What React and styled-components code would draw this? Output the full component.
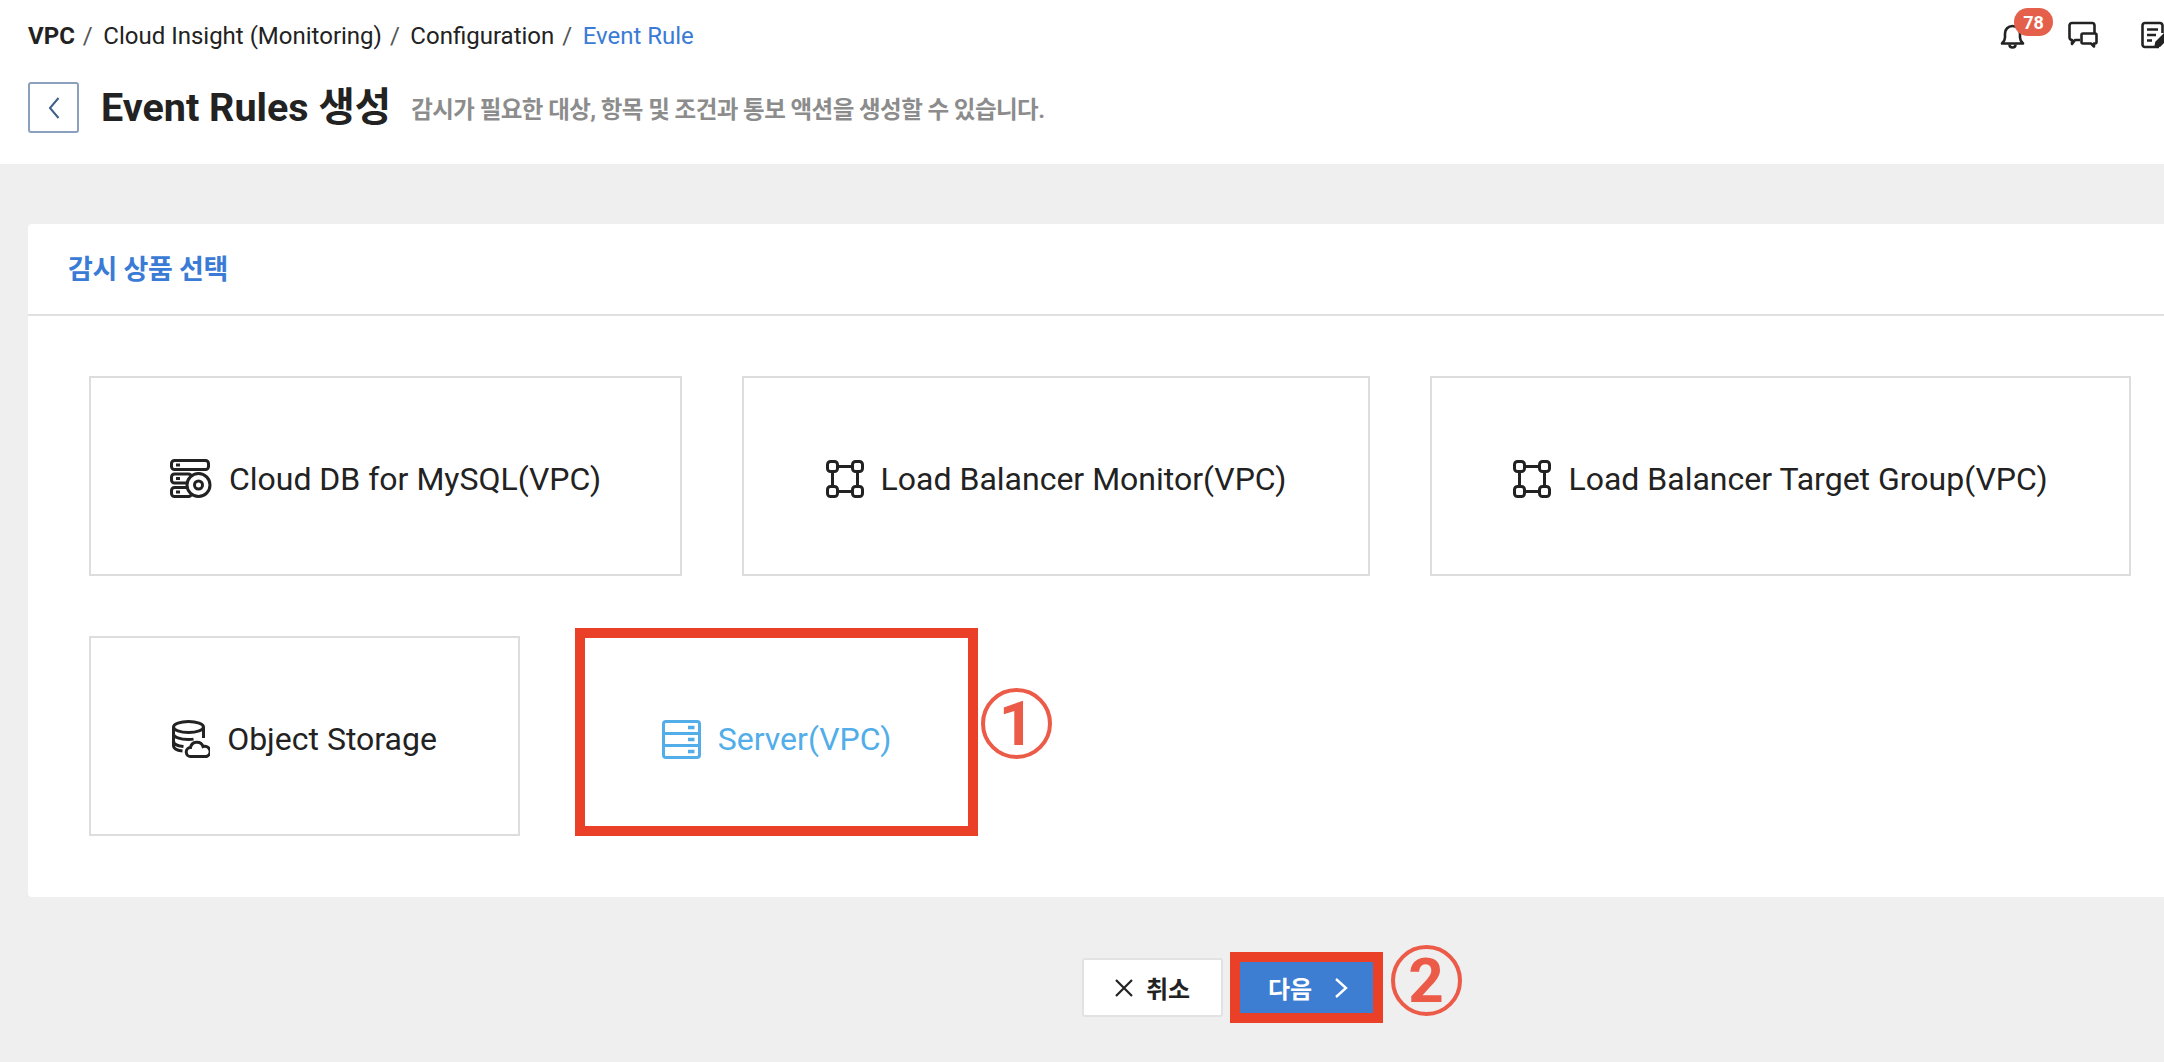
import React from "react";
import styled, { createGlobalStyle } from "styled-components";

const Global = createGlobalStyle`
  html, body { margin: 0; padding: 0; background: #efefef; }
  #root { width: 2164px; height: 1062px; overflow: hidden; }
  * { box-sizing: border-box; }
`;
const FONT = `Roboto, "Noto Sans CJK KR", sans-serif`;
const RED = "#ea4027";
const Page = styled.div`
  width: 2164px; height: 1062px; overflow: hidden; font-family: ${FONT}; color: #222;
`;
const Header = styled.header`
  height: 164px; background: #fff; padding: 0 0 0 28px; position: relative;
`;
const TopRow = styled.div`
  display: flex; justify-content: space-between; height: 82px; padding-top: 21px;
`;
const Crumbs = styled.nav`
  display: flex; align-items: center; height: 30px; font-size: 24px; line-height: 30px;
`;
const Crumb = styled.span`
  font-weight: ${p => (p.$bold ? 700 : 400)};
  color: ${p => (p.$active ? "#3a7bd5" : "#222")};
`;
const Sep = styled.span`
  color: #555; margin: 0 10.5px 0 8px;
`;
const Tools = styled.div`
  display: flex; align-items: flex-start; width: 170px; margin-right: -6px; gap: 43px; position: relative;
`;
const ToolIcon = styled.svg`
  display: block; flex: none; fill: none; stroke: #222; stroke-width: 2.6;
`;
const Badge = styled.span`
  position: absolute; left: 14px; top: -13px; width: 39px; height: 28px; border-radius: 14px;
  background: #e5604a; color: #fff; font-size: 18px; font-weight: 700; display: flex; align-items: center; justify-content: center;
`;
const TitleRow = styled.div`
  display: flex; align-items: center; height: 51px;
`;
const BackButton = styled.button`
  width: 51px; height: 51px; padding: 0; background: #fff; border: 2px solid #8aa0bd; border-radius: 3px;
  display: flex; align-items: center; justify-content: center;
`;
const Title = styled.h1`
  margin: 0 0 0 22px; font-size: 39.5px; font-weight: 700; line-height: 51px; color: #222;
`;
const Sub = styled.span`
  margin: 1px 0 0 20px; font-size: 23.5px; font-weight: 700; color: #8c8c8c; letter-spacing: -0.55px;
`;
const Main = styled.main`
  width: 2464px; padding: 60px 28px 0;
`;
const Panel = styled.section`
  background: #fff; border-radius: 4px;
`;
const PanelHead = styled.div`
  height: 92px; border-bottom: 2px solid #e0e0e0; padding: 0 0 0 40px; display: flex; align-items: center;
`;
const PanelTitle = styled.h2`
  margin: 0; font-size: 27px; font-weight: 700; color: #3a7bd5; letter-spacing: -0.3px; position: relative; top: -2px;
`;
const PanelBody = styled.div`
  padding: 60px 61px 61px; display: flex; flex-direction: column; gap: 60px;
`;
const CardRow = styled.div`
  display: flex; gap: ${p => p.$gap || 60}px;
`;
const Card = styled.div`
  position: relative; height: 200px; width: ${p => p.$w}px; background: #fff; border: 2px solid #ddd;
  display: flex; align-items: center; justify-content: center; gap: 17px; padding-top: 5px;
  font-size: 32px; color: #222;
`;
const SelectedCard = styled(Card)`
  height: 208px; margin-top: -8px; border: 10px solid ${RED}; color: #52ade9; padding-top: 14px;
`;
const Circled = styled.span`
  position: absolute; width: 71px; height: 71px; border-radius: 50%; border: 4px solid #ec5a48; color: #ec5a48;
  display: flex; align-items: center; justify-content: center; font-size: 62px; line-height: 1; font-weight: 700; font-family: Roboto, sans-serif;
  left: ${p => p.$left}px; top: ${p => p.$top}px;
`;
const Icon = styled.svg`
  display: block; flex: none; fill: none; stroke: currentColor; stroke-width: 3;
`;
const Footer = styled.div`
  display: flex; justify-content: center; align-items: center; gap: 7px; margin-top: 55px; height: 71px;
`;
const CancelButton = styled.button`
  width: 141px; height: 59px; background: #fff; border: 2px solid #e2e2e2; border-radius: 3px; padding: 0;
  display: flex; align-items: center; justify-content: center; gap: 12px;
  font: 700 24px ${FONT}; color: #222;
`;
const NextButton = styled.button`
  position: relative; width: 153px; height: 71px; background: #3d7dd2; border: 10px solid ${RED}; padding: 0 0 0 4px;
  display: flex; align-items: center; justify-content: center; gap: 22px;
  font: 700 24px ${FONT}; color: #fff;
`;

const DbIcon = () => (
  <Icon width="42" height="40" viewBox="0 0 42 40">
    <rect x="1.5" y="1.5" width="37" height="9" rx="3" />
    <rect x="1.5" y="15" width="20" height="9" rx="3" />
    <rect x="1.5" y="28.5" width="20" height="9" rx="3" />
    <path d="M6 6h4M6 19.5h4M6 33h4" />
    <circle cx="28.5" cy="26" r="11.5" fill="#fff" />
    <circle cx="28.5" cy="26" r="4" />
  </Icon>
);
const NodesIcon = () => (
  <Icon width="38" height="38" viewBox="0 0 38 38">
    <rect x="1.5" y="1.5" width="10" height="10" rx="3" />
    <rect x="26.5" y="1.5" width="10" height="10" rx="3" />
    <rect x="1.5" y="26.5" width="10" height="10" rx="3" />
    <rect x="26.5" y="26.5" width="10" height="10" rx="3" />
    <path d="M11.5 6.500h15M11.5 31.500h15M6.500 11.500v15M31.500 11.500v15" />
  </Icon>
);
const StorageIcon = () => (
  <Icon width="38" height="38" viewBox="0 0 38 38">
    <ellipse cx="16.500" cy="7" rx="15" ry="5.500" />
    <path d="M1.500 7v19c0 2.500 4 4.500 9 5M31.500 7v11M1.500 14c0 3 6.500 5.500 15 5.500 2 0 3.500-.1 5-.4M1.500 21c0 3 4.500 5 10 5.500" />
    <path d="M19 36.500a4.500 4.500 0 0 1-.5-9 6.500 6.500 0 0 1 12.500-1 5 5 0 0 1 3.500 10z" fill="#fff" />
  </Icon>
);
const ServerIcon = () => (
  <Icon width="39" height="39" viewBox="0 0 39 39">
    <rect x="1.500" y="1.500" width="36" height="36" rx="2.500" />
    <path d="M1.500 13.500h36M1.500 25.500h36" />
    <path d="M26 7.500h6.500M26 19.500h6.500M26 31.500h6.500" strokeWidth="3.500" />
  </Icon>
);

export default function App() {
  return (
    <Page>
      <Global />
      <Header>
        <TopRow>
          <Crumbs>
            <Crumb $bold>VPC</Crumb><Sep>/</Sep>
            <Crumb>Cloud Insight (Monitoring)</Crumb><Sep>/</Sep>
            <Crumb>Configuration</Crumb><Sep>/</Sep>
            <Crumb $active>Event Rule</Crumb>
          </Crumbs>
          <Tools>
            <ToolIcon width="25" height="28" viewBox="0 0 25 28">
              <path d="M2 22.500h21c-1.500-1.500-3-3-3-6v-4c0-4-3-7.500-7.500-7.500S5 8.500 5 12.500v4c0 3-1.500 4.500-3 6z" strokeLinejoin="round" />
              <path d="M9.500 23.500c0 2 1.300 3 3 3s3-1 3-3" />
            </ToolIcon>
            <Badge>78</Badge>
            <ToolIcon width="30" height="28" viewBox="0 0 30 28">
              <path d="M12 19H7l-3 4v-4H4a2.500 2.500 0 0 1-2.500-2.500v-12A2.500 2.500 0 0 1 4 2h20a2.500 2.500 0 0 1 2.500 2.500V12" strokeLinejoin="round" />
              <path d="M15 12.500h12a1.500 1.500 0 0 1 1.500 1.500v7a1.500 1.500 0 0 1-1.500 1.500h-1v3l-3-3h-8a1.500 1.500 0 0 1-1.500-1.500v-7a1.500 1.500 0 0 1 1.500-1.500z" strokeLinejoin="round" />
            </ToolIcon>
            <ToolIcon width="29" height="28" viewBox="0 0 29 28">
              <path d="M18 26H4a2.500 2.500 0 0 1-2.500-2.500v-19A2.500 2.500 0 0 1 4 2h15a2.500 2.500 0 0 1 2.500 2.500V12" />
              <path d="M6 8.500h11M6 14h9M6 19.500h5" />
              <path d="M14 26l1-5 9-9 4 4-9 9z" fill="#222" stroke="#222" strokeWidth="1.500" />
            </ToolIcon>
          </Tools>
        </TopRow>
        <TitleRow>
          <BackButton aria-label="back">
            <svg width="14" height="24" viewBox="0 0 14 24" fill="none" stroke="#3f5f8a" strokeWidth="2">
              <path d="M11.500 2L3 12l8.500 10" />
            </svg>
          </BackButton>
          <Title>Event Rules 생성</Title>
          <Sub>감시가 필요한 대상, 항목 및 조건과 통보 액션을 생성할 수 있습니다.</Sub>
        </TitleRow>
      </Header>
      <Main>
        <Panel>
          <PanelHead><PanelTitle>감시 상품 선택</PanelTitle></PanelHead>
          <PanelBody>
            <CardRow>
              <Card $w={593}><DbIcon />Cloud DB for MySQL(VPC)</Card>
              <Card $w={628}><NodesIcon />Load Balancer Monitor(VPC)</Card>
              <Card $w={701}><NodesIcon />Load Balancer Target Group(VPC)</Card>
            </CardRow>
            <CardRow $gap={55}>
              <Card $w={431}><StorageIcon />Object Storage</Card>
              <SelectedCard $w={403}>
                <ServerIcon />Server(VPC)
                <Circled $left={396} $top={50}>1</Circled>
              </SelectedCard>
            </CardRow>
          </PanelBody>
        </Panel>
        <Footer>
          <CancelButton>
            <svg width="20" height="20" viewBox="0 0 20 20" fill="none" stroke="#222" strokeWidth="2.200"><path d="M2 2l16 16M18 2L2 18" /></svg>
            취소
          </CancelButton>
          <NextButton>
            다음
            <svg width="14" height="22" viewBox="0 0 14 22" fill="none" stroke="#fff" strokeWidth="2.400"><path d="M2 2l10 9-10 9" /></svg>
            <Circled $left={151} $top={-17}>2</Circled>
          </NextButton>
        </Footer>
      </Main>
    </Page>
  );
}
